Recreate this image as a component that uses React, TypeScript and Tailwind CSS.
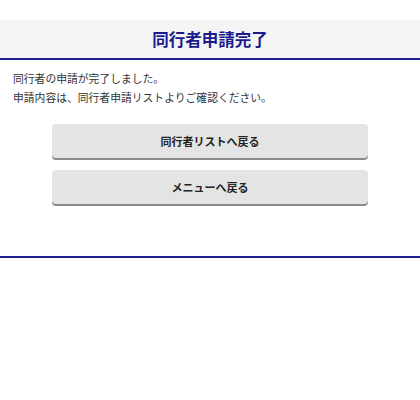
import React from 'react';

const FONT = "font-['Noto_Sans_CJK_JP',_'Noto_Sans',_sans-serif]";

const BackButton: React.FC<{ label: string }> = ({ label }) => (
  <button
    type="button"
    className="w-[316px] h-[34px] rounded-[4px] bg-[#e4e4e4] shadow-[0_2px_0_#8a8a8a] text-[11px] font-bold text-[#222] flex items-center justify-center"
  >
    {label}
  </button>
);

export default function App() {
  return (
    <div className={`${FONT} bg-white min-h-[400px] w-full pt-[20px]`}>
      {/* Header */}
      <div className="h-[40px] bg-[#f4f4f4] border-b-2 border-[#1e1e8e] flex items-center justify-center">
        <h1 className="text-[16.5px] font-bold text-[#1b1b8c] leading-none">同行者申請完了</h1>
      </div>

      {/* Message */}
      <div className="px-[13px] pt-[9px] text-[10.8px] leading-[19px] text-[#333]">
        <p>同行者の申請が完了しました。</p>
        <p>申請内容は、同行者申請リストよりご確認ください。</p>
      </div>

      {/* Buttons */}
      <div className="flex flex-col items-center gap-[12px] pt-[17px] pb-[52px]">
        <BackButton label="同行者リストへ戻る" />
        <BackButton label="メニューへ戻る" />
      </div>

      <div className="h-[2px] bg-[#1e1e8e]" />
    </div>
  );
}
